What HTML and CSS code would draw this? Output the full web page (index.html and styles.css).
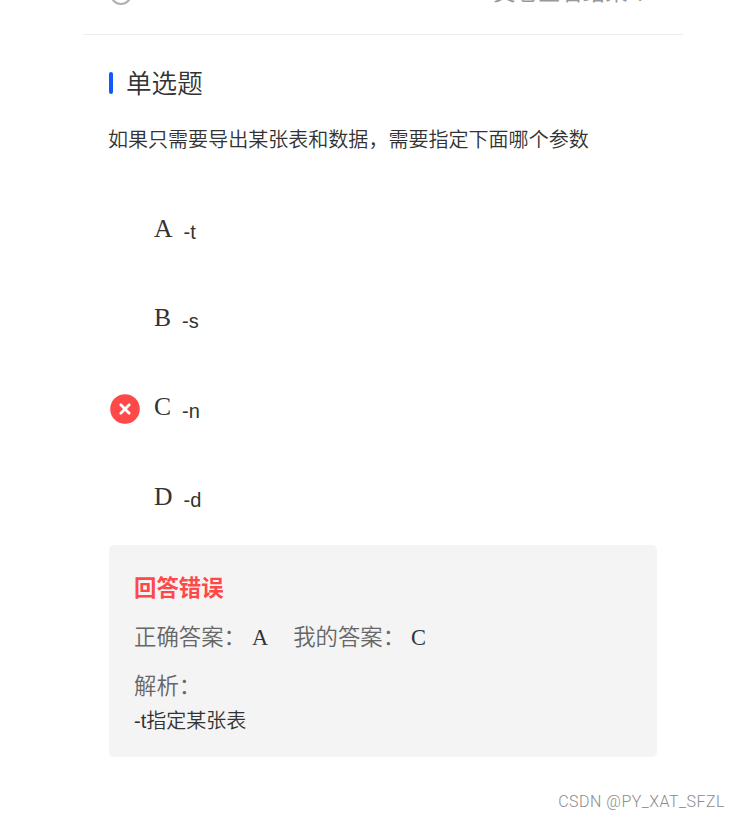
FILE: index.html
```
<!DOCTYPE html>
<html lang="zh-CN">
<head>
  <meta charset="UTF-8">
  <title>单选题</title>
  <link rel="stylesheet" href="styles.css">
</head>
<body>

<div class="page">
  <div class="topbar">
    <span class="circle"></span>
    <span class="tip">交卷查看结果<span class="bang">！</span></span>
  </div>

  <div class="content">
    <h1 class="type">单选题</h1>
    <p class="question">如果只需要导出某张表和数据，需要指定下面哪个参数</p>

    <!-- Options -->
    <ul class="options">
      <li>
        <span class="mark"></span>
        <span class="letter">A</span>
        <span class="text">-t</span>
      </li>
      <li>
        <span class="mark"></span>
        <span class="letter">B</span>
        <span class="text">-s</span>
      </li>
      <li>
        <span class="mark">
          <svg width="30" height="30" viewBox="0 0 30 30">
            <circle cx="15" cy="15" r="14.8" fill="#ff4848"/>
            <path d="M10.8 10.8l8.4 8.4M19.2 10.8l-8.4 8.4" stroke="#fff" stroke-width="2.8" stroke-linecap="round"/>
          </svg>
        </span>
        <span class="letter">C</span>
        <span class="text">-n</span>
      </li>
      <li>
        <span class="mark"></span>
        <span class="letter">D</span>
        <span class="text">-d</span>
      </li>
    </ul>

    <!-- Result -->
    <div class="result">
      <div class="status">回答错误</div>
      <div class="answers">
        <span class="label">正确答案：</span>
        <span class="value right">A</span>
        <span class="label">我的答案：</span>
        <span class="value">C</span>
      </div>
      <div class="label">解析：</div>
      <div class="analysis">-t指定某张表</div>
    </div>
  </div>
</div>

<div class="watermark">CSDN @PY_XAT_SFZL</div>

</body>
</html>
```
FILE: styles.css
```
* {
  box-sizing: border-box;
}

body {
  margin: 0;
  height: 819px;
  overflow: hidden;
  background: #fff;
  color: #333;
  font-family: "Liberation Sans", "Noto Sans CJK SC", sans-serif;
}

.page {
  width: 600px;
  margin-left: 83px;
}

/* Top bar, scrolled mostly out of view */
.topbar {
  display: flex;
  justify-content: space-between;
  align-items: flex-start;
  height: 35px;
  padding: 0 26px 0 27px;
  border-bottom: 1px solid #ededed;
  overflow: hidden;
}

.circle {
  width: 22px;
  height: 22px;
  margin-top: -17px;
  border: 2px solid #b0b0b0;
  border-radius: 50%;
}

.tip {
  margin-top: -22px;
  color: #999;
  font-size: 22.4px;
  line-height: 30px;
}

.bang {
  margin-left: 7px;
}

.content {
  padding: 32px 26px 0 25px;
}

.type {
  display: flex;
  align-items: center;
  margin: 0;
  font-size: 25.6px;
  font-weight: 350;
  line-height: 34px;
}

.type::before {
  content: "";
  width: 4px;
  height: 22px;
  margin: -2px 13px 0 1px;
  border-radius: 2px;
  background: #1059ff;
}

.question {
  margin: 24px 0 0;
  font-size: 20.05px;
  font-weight: 350;
  line-height: 30px;
  white-space: nowrap;
}

/* Options */
.options {
  margin: 31px 0 0;
  padding: 0;
  list-style: none;
}

.options li {
  display: flex;
  align-items: center;
  height: 89.3px;
}

.mark {
  width: 30px;
  height: 30px;
  margin: 0 14px 0 2px;
}

.mark svg {
  display: block;
}

.letter {
  margin: -4px 11px 0 0;
  font-family: "Liberation Serif", serif;
  font-size: 25.6px;
  line-height: 30px;
}

.text {
  margin-top: 3px;
  font-size: 20px;
  line-height: 24px;
}

/* Result */
.result {
  height: 212px;
  margin: 2px 0 0 1px;
  padding: 27px 25px 25px;
  border-radius: 5px;
  background: #f4f4f4;
  font-size: 22.4px;
  line-height: 34px;
}

.status {
  color: #ff4848;
  font-weight: bold;
}

.answers {
  display: flex;
  margin: 15px 0;
}

.label {
  color: #666;
  font-weight: 350;
}

.value {
  margin-left: 6px;
  font-family: "Liberation Serif", serif;
}

.right {
  margin-right: 25px;
}

.analysis {
  font-size: 20px;
  font-weight: 350;
}

.watermark {
  margin: 34px 15px 0 0;
  color: #8c8c8c;
  font-family: Roboto, sans-serif;
  font-size: 16px;
  font-weight: 300;
  letter-spacing: 0.5px;
  line-height: 22px;
  text-align: right;
}
```
